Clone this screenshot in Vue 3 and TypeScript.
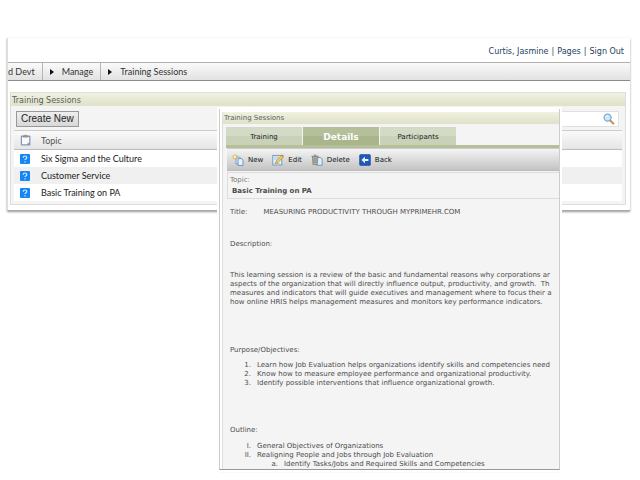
<script setup lang="ts">
import { ref } from 'vue'

const crumbs: string[] = ['d Devt', 'Manage', 'Training Sessions']
const topics: string[] = ['Six Sigma and the Culture', 'Customer Service', 'Basic Training on PA']
const tabs: string[] = ['Training', 'Details', 'Participants']
const activeTab = ref('Details')
const query = ref('')

const description: string[] = [
  'This learning session is a review of the basic and fundamental reasons why corporations ar',
  'aspects of the organization that will directly influence output, productivity, and growth.  Th',
  'measures and indicators that will guide executives and management where to focus their a',
  'how online HRIS helps management measures and monitors key performance indicators.',
]
const objectives: string[] = [
  'Learn how Job Evaluation helps organizations identify skills and competencies need',
  'Know how to measure employee performance and organizational productivity.',
  'Identify possible interventions that influence organizational growth.',
]
</script>

<template>
  <div class="page">
    <main class="window">
      <header class="account">
        <a href="#">Curtis, Jasmine</a><span>|</span><a href="#">Pages</a><span>|</span><a href="#">Sign Out</a>
      </header>
      <nav class="crumbs" aria-label="Breadcrumb">
        <a v-for="crumb in crumbs" :key="crumb" href="#">{{ crumb }}</a>
      </nav>
      <section class="panel">
        <h1>Training Sessions</h1>
        <div class="panel-body">
          <div class="tools">
            <button type="button" class="create">Create New</button>
            <label class="search">
              <input v-model="query" type="text" aria-label="Search sessions" />
              <svg viewBox="0 0 12 12" aria-hidden="true">
                <path d="M7 7.2 10.4 10.6" stroke="#c88a50" stroke-width="2" stroke-linecap="round" />
                <circle cx="4.6" cy="4.6" r="3.5" fill="#c9e9fb" stroke="#7da9d6" stroke-width="1.3" />
                <path d="M2.8 4.4Q3 2.8 4.8 2.7" fill="none" stroke="#fff" />
              </svg>
            </label>
          </div>
          <table>
            <thead>
              <tr>
                <th class="icon">
                  <svg viewBox="0 0 12 12" aria-hidden="true">
                    <rect x=".8" y="1.4" width="9.6" height="10" rx="1" fill="#8397b8" />
                    <path d="M2 3h7.2v5.2L7.2 10.2H2z" fill="#f8fafc" />
                    <path d="M9.2 8.2 7.2 10.2v-2z" fill="#c6d1df" />
                    <path d="M3 1.4h1.2L5.5.4l1.4 1H8v2H3z" fill="#9b9180" />
                  </svg>
                </th>
                <th>Topic</th>
              </tr>
            </thead>
            <tbody>
              <tr v-for="topic in topics" :key="topic">
                <td class="icon">
                  <svg viewBox="0 0 12 12" aria-hidden="true">
                    <rect width="10" height="10" y="1" rx="1" fill="#1686f5" />
                    <path d="M3.2 4.6Q3.3 3 5 3T6.8 4.5Q6.8 5.3 5.8 5.9 5 6.4 5 7.1M5 8.2v1.2" fill="none" stroke="#d8edff" stroke-width="1.2" />
                  </svg>
                </td>
                <td>{{ topic }}</td>
              </tr>
            </tbody>
          </table>
        </div>
      </section>
    </main>

    <article class="popup">
      <div class="popup-inner">
        <h2>Training Sessions</h2>
        <div class="tabs" role="tablist">
          <button
            v-for="tab in tabs"
            :key="tab"
            type="button"
            role="tab"
            :aria-selected="activeTab === tab"
            :class="{ active: activeTab === tab }"
            @click="activeTab = tab"
          >{{ tab }}</button>
        </div>
        <div class="toolbar">
          <button type="button">
            <svg viewBox="0 0 12 12" aria-hidden="true">
              <path d="M4 3h3.5l1.3 1.4V10H4z" fill="#dcebf8" stroke="#7193b5" stroke-width=".8" />
              <path d="M6 4.6h3.6L11 6v5.4H6z" fill="#e6f3ff" stroke="#5684b4" stroke-width=".8" />
              <path d="M3 .2v5.6M.2 3h5.6M1 1l4 4M5 1 1 5" stroke="#e4a727" stroke-width=".8" />
              <circle cx="3" cy="3" r="1.2" fill="#fff4a8" />
            </svg>
            New
          </button>
          <button type="button">
            <svg viewBox="0 0 12 12" aria-hidden="true">
              <rect x=".8" y="1.4" width="9" height="9.6" fill="#e9f4ff" stroke="#6b92bb" stroke-width=".9" />
              <path d="M2 3.2h5M2 5h3.5M2 9.4h6" stroke="#94b9de" stroke-width=".8" />
              <path d="M9.4 1.2 11.3 3 6 8.6l-2.4.8.5-2.4z" fill="#f3ce45" stroke="#9a8137" stroke-width=".6" />
              <path d="m9.4 1.2.8-.8L12 2.1l-.7.9z" fill="#cf795c" />
            </svg>
            Edit
          </button>
          <button type="button">
            <svg viewBox="0 0 12 12" aria-hidden="true">
              <path d="M5.5 3.5h3.8L11.2 5v6.2H5.5z" fill="#d9efff" stroke="#5d8ab5" stroke-width=".8" />
              <path d="M1.4 3h5.4l-.5 7.6H2z" fill="#c3c3bd" stroke="#77756d" stroke-width=".7" />
              <path d="M.5 2.3h7.2M2.9 1.2h2.4M3.1 4v5.5M5 4v5.5" stroke="#77756d" stroke-width=".9" />
            </svg>
            Delete
          </button>
          <button type="button">
            <svg viewBox="0 0 12 12" aria-hidden="true">
              <rect x=".6" y=".6" width="10.8" height="10.8" rx="1" fill="#2059bb" stroke="#174294" stroke-width=".6" />
              <path d="M2.4 6 6 2.8v2.3h3.4v1.8H6v2.3z" fill="#e8f3ff" />
            </svg>
            Back
          </button>
        </div>
        <dl class="topic">
          <dt>Topic:</dt>
          <dd>Basic Training on PA</dd>
        </dl>
        <div class="details">
          <p class="title"><span>Title:</span><span>MEASURING PRODUCTIVITY THROUGH MYPRIMEHR.COM</span></p>
          <h3>Description:</h3>
          <p class="description"><span v-for="line in description" :key="line">{{ line }}</span></p>
          <h3>Purpose/Objectives:</h3>
          <ol class="objectives">
            <li v-for="item in objectives" :key="item"><span>{{ item }}</span></li>
          </ol>
          <h3>Outline:</h3>
          <ol class="roman">
            <li><span>General Objectives of Organizations</span></li>
            <li>
              <div>
                Realigning People and Jobs through Job Evaluation
                <ol class="alpha">
                  <li><span>Identify Tasks/Jobs and Required Skills and Competencies</span></li>
                </ol>
              </div>
            </li>
          </ol>
        </div>
      </div>
    </article>
  </div>
</template>

<style>
body {
  margin: 0;
  background: #fff;
}
</style>

<style scoped>
.page {
  position: relative;
  min-height: 100vh;
  padding: 38px 10px 0 7px;
  box-sizing: border-box;
  font: 7px/9px "DejaVu Sans", sans-serif;
  color: #4c4c4c;
}
h1, h2, h3, p, ol, dl, dd {
  margin: 0;
  padding: 0;
  font-weight: normal;
}
h3 {
  font-size: 7px;
}
a {
  color: inherit;
  text-decoration: none;
}
button {
  font: inherit;
  color: inherit;
  border: 0;
  background: none;
  padding: 0;
  cursor: pointer;
}
svg {
  display: block;
  width: 12px;
  height: 12px;
  flex: none;
}
.window {
  border-left: 1px solid #ddd;
  border-bottom: 1px solid #aaa;
  box-shadow: 0 1px 2px #999;
}
.account {
  display: flex;
  justify-content: flex-end;
  align-items: center;
  gap: 3px;
  height: 24px;
  padding: 2px 6px 0 0;
  box-sizing: border-box;
  font-size: 8px;
  color: #234260;
}
.crumbs {
  display: flex;
  height: 17px;
  border-top: 1px solid #b0b0b0;
  border-bottom: 1px solid #8c8c8c;
  background: linear-gradient(#fafafa, #e2e2e2);
  font: 9px/17px Lato, sans-serif;
  color: #333;
}
.crumbs a {
  display: flex;
  align-items: center;
}
.crumbs a + a {
  margin-left: 7px;
  border-left: 1px solid #b5b5b5;
}
.crumbs a + a::before {
  content: "";
  margin: 0 8px 0 7px;
  border: 3px solid transparent;
  border-left: 4px solid #111;
  border-right: 0;
}
.panel {
  margin: 11px 4px 5px 2px;
  border: 1px solid #ddd;
  background: #f4f4f4;
}
h1 {
  padding: 2px 1px 0;
  font-size: 8px;
  line-height: 11px;
  color: #566062;
  background: linear-gradient(#f1f2df, #dfe1c9);
}
.panel-body {
  padding: 5px 3px 3px;
}
.tools {
  display: flex;
  justify-content: space-between;
  padding: 0 3px 3px 2px;
}
.create {
  height: 16px;
  padding: 0 4px;
  border: 1px solid #999;
  background: linear-gradient(#eee, #d8d8d8);
  font: 10px/14px "Liberation Sans", sans-serif;
  color: #222;
}
.search {
  display: flex;
  align-items: center;
  width: 140px;
  height: 16px;
  padding-right: 3px;
  box-sizing: border-box;
  border: 1px solid #e0e0e0;
  background: #fff;
}
.search input {
  flex: 1;
  min-width: 0;
  padding: 0 3px;
  border: 0;
  outline: 0;
  background: none;
  font: 9px/12px Lato, sans-serif;
}
table {
  width: 100%;
  border-collapse: collapse;
  font: 9px/17px Lato, sans-serif;
  color: #222;
}
th, td {
  height: 17px;
  padding: 0;
  text-align: left;
  font-weight: normal;
}
thead {
  color: #555;
  background: linear-gradient(#fafafa, #e4e4e4);
}
th {
  height: 18px;
  border-top: 1px solid #ccc;
  border-bottom: 1px solid #bbb;
}
.icon {
  width: 21px;
  padding-left: 6px;
}
tbody tr {
  background: #fff;
}
tbody tr:nth-child(even) {
  background: #f0f0f0;
}
.popup {
  position: absolute;
  top: 109px;
  left: 219px;
  right: 80px;
  box-sizing: border-box;
  border-left: 1px solid #ccc;
  border-right: 1px solid #ccc;
  border-bottom: 1px solid #999;
  padding: 3px 0 0 2px;
  background: #fff;
  outline: 2px solid #fff;
  box-shadow: 0 1px 2px #aaa;
}
.popup-inner {
  overflow: hidden;
  border-left: 1px solid #ddd;
  background: #f4f4f4;
  white-space: nowrap;
}
h2 {
  padding: 1px 1px 0;
  font-size: 7px;
  line-height: 11px;
  color: #566062;
  background: linear-gradient(#f1f2df, #dfe1c9);
}
.tabs {
  display: flex;
  gap: 1px;
  margin: 3px 0 0 3px;
  border-bottom: 3px solid #b5c09b;
}
.tabs button {
  width: 76px;
  height: 18px;
  padding-top: 2px;
  background: linear-gradient(#d3dac5 50%, #c9d2b8 50%);
  color: #222;
}
.tabs .active {
  background: linear-gradient(#b5c09b 50%, #a9b68c 50%);
  color: #fff;
  font-size: 9px;
  font-weight: bold;
}
.toolbar {
  display: flex;
  gap: 9px;
  height: 23px;
  margin-left: 4px;
  padding: 1px 0 0 5px;
  box-sizing: border-box;
  border-top: 1px solid #ccc;
  border-bottom: 1px solid #bbb;
  background: linear-gradient(#f4f4f4, #c3c3c3);
  color: #111;
}
.toolbar button {
  display: flex;
  align-items: center;
  gap: 4px;
}
.topic {
  margin: 1px 0 0 4px;
  padding: 3px 2px 2px;
  border: 1px solid #ddd;
  border-right: 0;
}
.topic dt {
  color: #777;
}
.topic dd {
  padding: 2px 0 0 2px;
  font-weight: bold;
}
.details {
  padding: 9px 0 0 7px;
}
.title {
  display: flex;
  gap: 16px;
  margin-bottom: 23px;
}
.description {
  margin: 22px 0 39px;
}
.description span {
  display: block;
  white-space: pre;
}
ol {
  list-style: none;
  counter-reset: item;
}
li {
  display: flex;
  gap: 6px;
  counter-increment: item;
}
li::before {
  content: counter(item) ".";
  width: 21px;
  text-align: right;
}
.objectives {
  margin: 6px 0 38px;
}
.roman {
  margin-top: 7px;
}
.roman > li::before {
  content: counter(item, upper-roman) ".";
}
.alpha > li::before {
  content: counter(item, lower-alpha) ".";
}
</style>
